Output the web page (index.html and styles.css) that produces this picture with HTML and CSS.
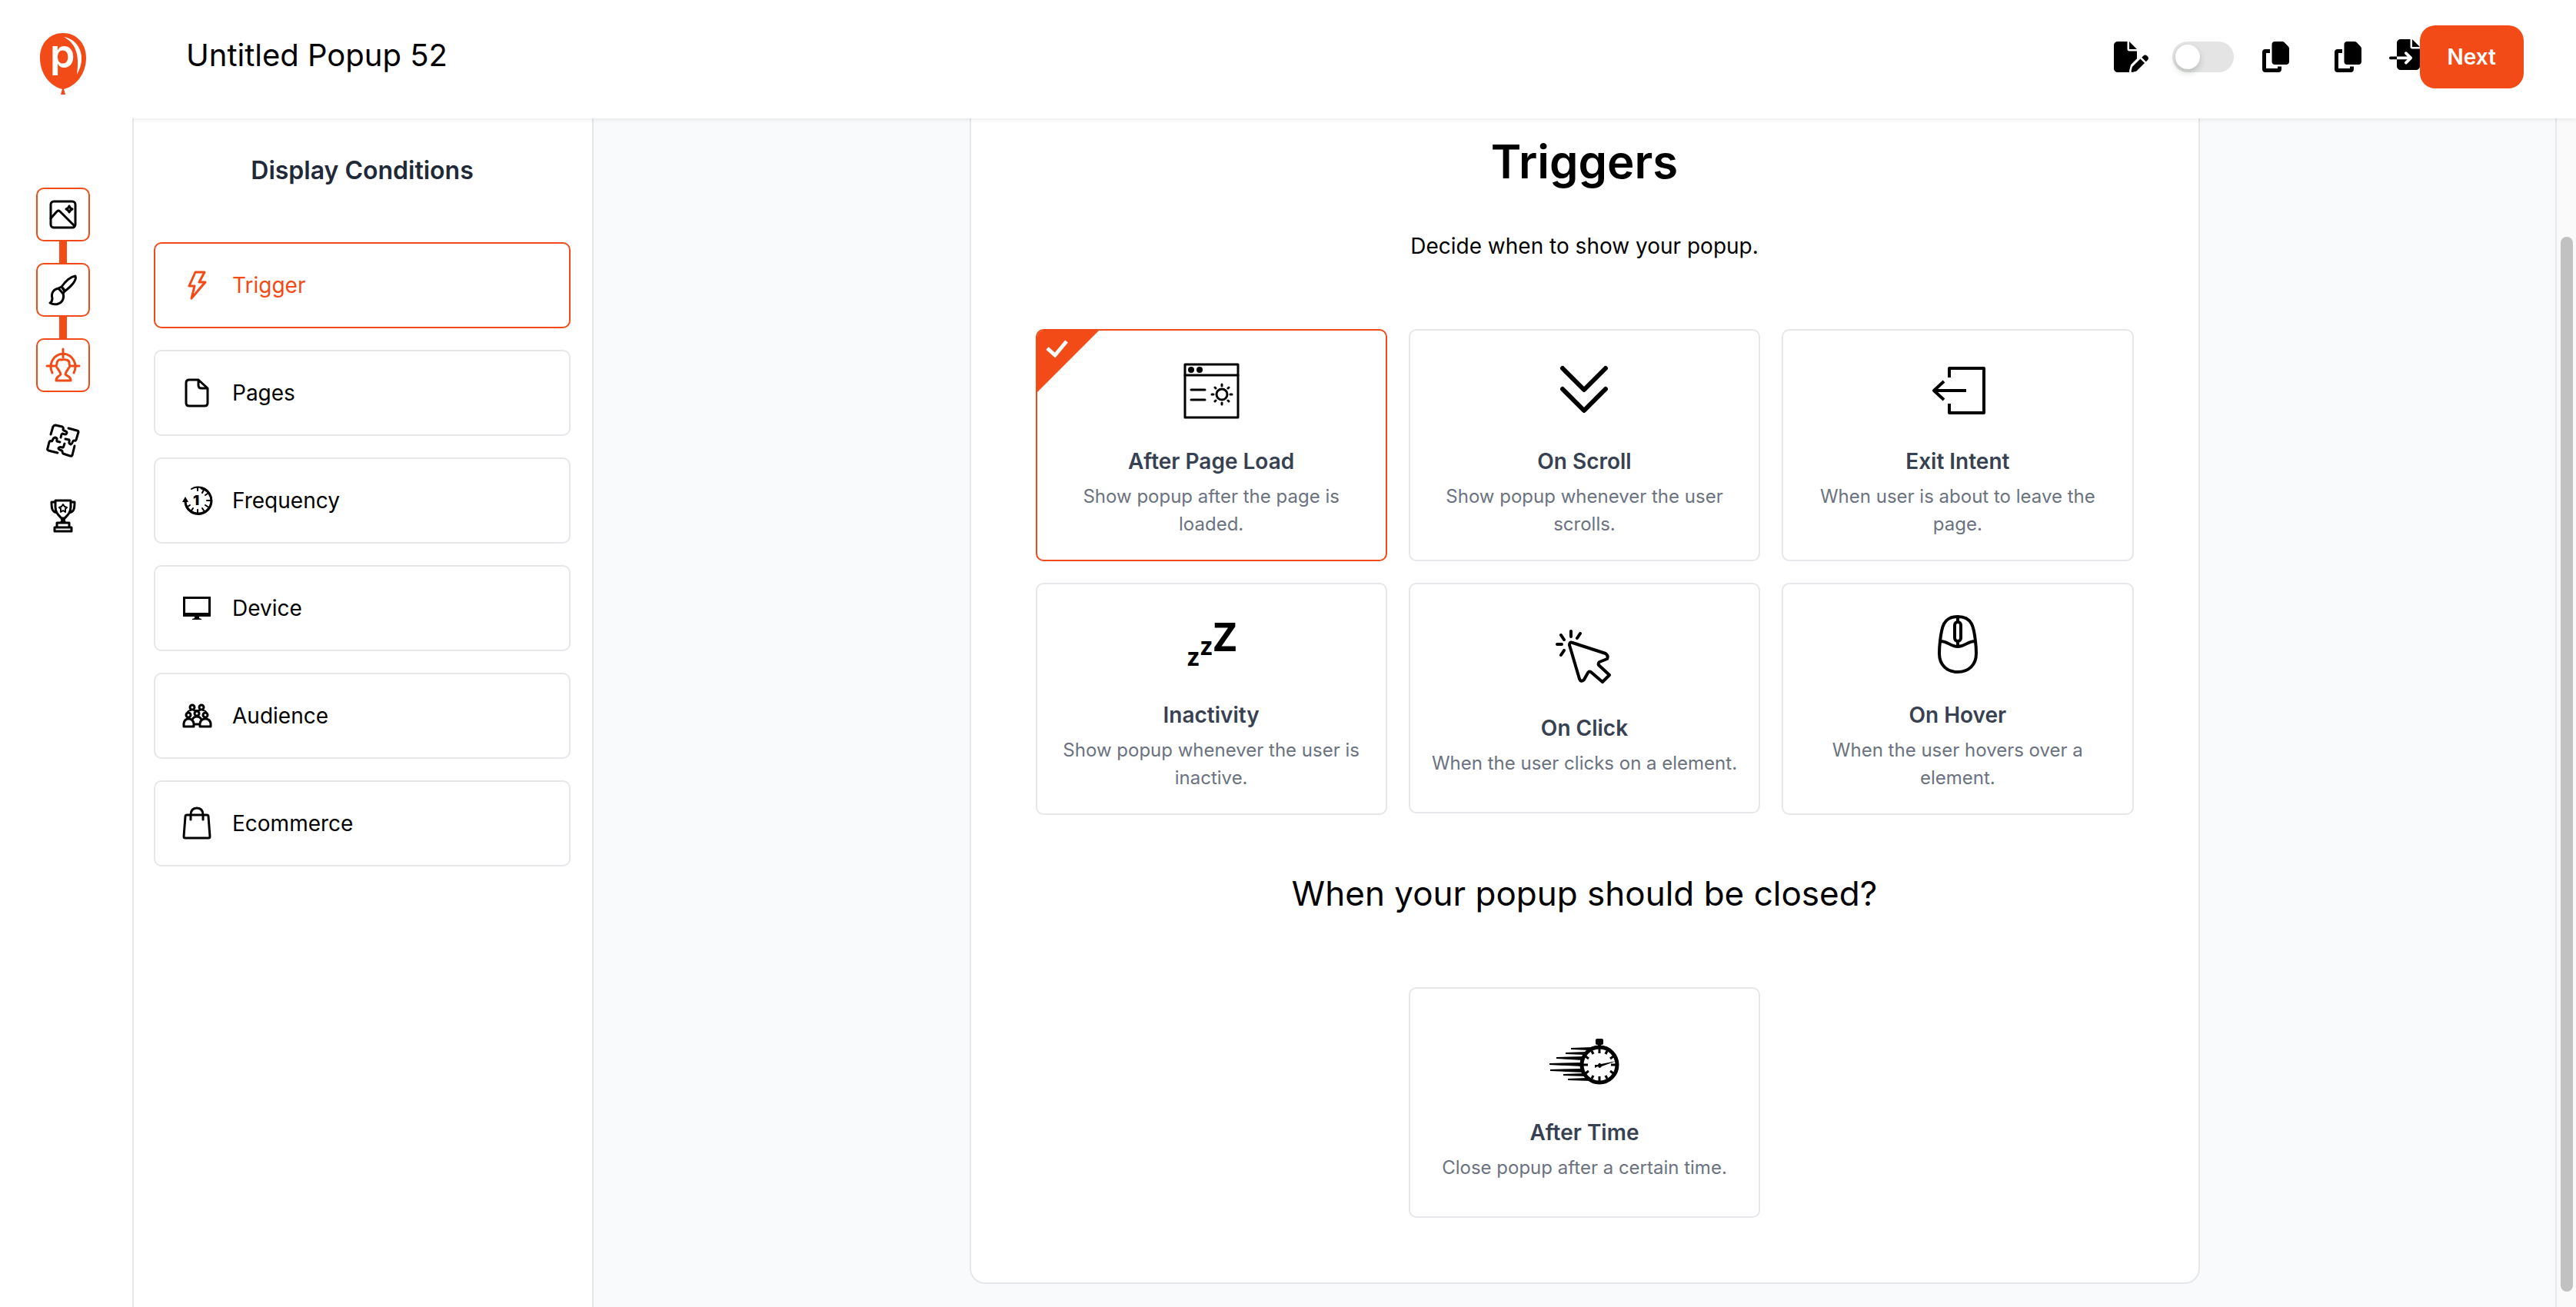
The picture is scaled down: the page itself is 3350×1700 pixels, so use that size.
FILE: index.html
```html
<!DOCTYPE html>
<html lang="en">
<head>
  <meta charset="UTF-8">
  <title>Untitled Popup 52</title>
  <link rel="stylesheet" href="styles.css">
</head>
<body>
<div class="app">
  <!-- left rail -->
  <nav class="rail">
    <a class="logo" href="#" aria-label="Home">
      <svg width="60" height="80" viewBox="0 0 60 80">
        <path d="M30 0C47 0 60 13 60 32C60 53 47 69 31 73L32 76L33 80H27L28 76L29 73C13 69 0 53 0 32C0 13 13 0 30 0Z" fill="#f24b17"/>
        <text class="logo-letter" x="13" y="45">p</text>
        <path d="M31 5C50 8 62 30 48 54C51 32 49 15 31 5Z" fill="#fff"/>
      </svg>
    </a>
    <a class="step done" href="#" aria-label="Template">
      <svg width="44" height="44" viewBox="0 0 44 44"><g class="line"><rect x="6" y="5" width="32" height="34" rx="4"/><path d="M6 27L14 18Q16 16 18 18L37 37M30 11Q31 14 34 15Q31 16 30 19Q29 16 26 15Q29 14 30 11Z"/></g></svg>
    </a>
    <span class="link"></span>
    <a class="step done" href="#" aria-label="Design">
      <svg width="44" height="44" viewBox="0 0 44 44"><g class="line"><path d="M20 18C25 11 32 5 38 4C40 9 33 17 24 24ZM20 18L16 20L22 27L24 24M16 20C10 21 6 26 8 33C8 36 7 38 5 39C12 43 20 40 22 34C23 31 23 29 22 27M20 18Q23 20 24 24"/></g></svg>
    </a>
    <span class="link"></span>
    <a class="step done active" href="#" aria-label="Targeting">
      <svg width="44" height="44" viewBox="0 0 44 44"><g class="line"><path d="M22 1V12M1 23H11M33 23H43M8 32C3 22 8 8 22 7C36 8 41 22 36 32"/><path d="M19 34C19 31 16 29 15 26C13 25 13 22 14 20C14 16 17 14 20 15C25 14 31 15 30 20C31 22 31 25 29 26C28 29 25 31 25 34C28 37 32 36 32 42H13C13 36 17 37 19 34Z"/></g></svg>
    </a>
    <a class="step next" href="#" aria-label="Integrations">
      <svg width="44" height="44" viewBox="0 0 44 44"><g class="line"><path d="M6 14L9 4Q10 2 12 2L21 4Q23 5 22 8C23 10 27 9 27 12C26 15 24 14 21 13C19 14 20 16 19 18"/><path d="M29 6L40 9Q42 9 42 11L39 21Q38 23 36 22C34 22 35 26 32 27C28 26 31 22 30 21L25 20"/><path d="M37 29L34 41Q33 43 31 42L22 39Q21 38 21 36C21 34 16 35 16 32C17 29 20 31 22 31C23 30 23 28 24 26"/><path d="M15 38L3 35Q1 34 2 32L4 24Q5 22 7 23C9 23 8 18 12 18C16 19 13 22 14 23L18 24"/></g></svg>
    </a>
    <a class="step next" href="#" aria-label="Goals">
      <svg width="44" height="44" viewBox="0 0 44 44"><g class="line"><path d="M12 2H32V10C32 18 28 21 24 25H20C16 21 12 18 12 10ZM12 4H7C7 13 8 17 14 18M32 4H37C37 13 36 17 30 18M20 25L21 28L19 31M24 25L23 28L25 31M14 31H30V37H14ZM11 37H33V42H11Z"/><path class="thin" d="M22 7L24 10L27 11L25 13L25 17L22 15L19 17L19 13L17 11L20 10Z"/></g></svg>
    </a>
  </nav>

  <div class="page">
    <header class="topbar">
      <h1 class="popup-name">Untitled Popup 52</h1>
      <button class="icon-btn" aria-label="Edit">
        <svg width="45" height="40" viewBox="0 0 576 512"><path d="M0 64C0 28.7 28.7 0 64 0L224 0l0 128c0 17.7 14.3 32 32 32l128 0 0 125.7-86.8 86.8c-10.3 10.3-17.5 23.1-21 37.2l-18.7 74.9c-2.3 9.2-1.8 18.8 1.3 27.5L64 512c-35.3 0-64-28.7-64-64L0 64zm384 64l-128 0L256 0 384 128zM549.8 235.7l14.4 14.4c15.6 15.6 15.6 40.9 0 56.6l-29.4 29.4-71-71 29.4-29.4c15.6-15.6 40.9-15.6 56.6 0zM311.9 417L441.1 287.8l71 71L382.9 487.9c-4.1 4.1-9.2 7-14.9 8.4l-60.1 15c-5.5 1.4-11.2-.2-15.2-4.2s-5.6-9.7-4.2-15.2l15-60.1c1.4-5.6 4.3-10.8 8.4-14.9z"/></svg>
      </button>
      <input class="switch" type="checkbox" role="switch" aria-label="Publish popup">
      <button class="icon-btn copy" aria-label="Copy">
        <svg width="35" height="40" viewBox="0 0 448 512"><path d="M208 0L332.1 0c12.7 0 24.9 5.1 33.9 14.1l67.9 67.9c9 9 14.1 21.2 14.1 33.9L448 336c0 26.5-21.5 48-48 48l-192 0c-26.5 0-48-21.5-48-48l0-288c0-26.5 21.5-48 48-48zM48 128l80 0 0 64-64 0 0 256 192 0 0-32 64 0 0 48c0 26.5-21.5 48-48 48L48 512c-26.5 0-48-21.5-48-48L0 176c0-26.5 21.5-48 48-48z"/></svg>
      </button>
      <button class="icon-btn duplicate" aria-label="Duplicate">
        <svg width="35" height="40" viewBox="0 0 448 512"><path d="M208 0L332.1 0c12.7 0 24.9 5.1 33.9 14.1l67.9 67.9c9 9 14.1 21.2 14.1 33.9L448 336c0 26.5-21.5 48-48 48l-192 0c-26.5 0-48-21.5-48-48l0-288c0-26.5 21.5-48 48-48zM48 128l80 0 0 64-64 0 0 256 192 0 0-32 64 0 0 48c0 26.5-21.5 48-48 48L48 512c-26.5 0-48-21.5-48-48L0 176c0-26.5 21.5-48 48-48z"/></svg>
      </button>
      <button class="icon-btn import" aria-label="Import">
        <svg width="40" height="40" viewBox="0 0 512 512"><path d="M128 64c0-35.3 28.7-64 64-64L352 0l0 128c0 17.7 14.3 32 32 32l128 0 0 288c0 35.3-28.7 64-64 64l-256 0c-35.3 0-64-28.7-64-64l0-112 174.1 0-39 39c-9.4 9.4-9.4 24.6 0 33.9s24.6 9.4 33.9 0l80-80c9.4-9.4 9.4-24.6 0-33.9l-80-80c-9.4-9.4-24.6-9.4-33.9 0s-9.4 24.6 0 33.9l39 39L128 288l0-224zm0 224l0 48L24 336c-13.3 0-24-10.7-24-24s10.7-24 24-24l104 0zM512 128l-128 0L384 0 512 128z"/></svg>
      </button>
      <button class="next-btn">Next</button>
    </header>

    <div class="content">
      <aside class="sidebar">
        <h2>Display Conditions</h2>
        <ul>
          <li><a class="condition active" href="#">
            <svg width="44" height="44" viewBox="0 0 44 44"><path class="line" d="M20 5H32L25 18H33L15 39L19 23H12Z"/></svg>
            Trigger</a></li>
          <li><a class="condition" href="#">
            <svg width="44" height="44" viewBox="0 0 44 44"><path class="line" d="M24 5H12Q8 5 8 9V35Q8 39 12 39H32Q36 39 36 35V16ZM24 5V12Q24 16 28 16H36"/></svg>
            Pages</a></li>
          <li><a class="condition" href="#">
            <svg width="44" height="44" viewBox="0 0 44 44"><path class="line thin" d="M15 7A17 17 0 1 1 7 24M23 5V9M31 8L29 12M36 13L33 15M39 22H35M36 30L33 28M31 35L29 32M23 38V34M15 35L17 32M10 30L13 28"/><path class="line" d="M28 6A17 17 0 1 1 7 24"/><path d="M3 24L7 17L11 24Z"/><text class="count" x="17" y="28">1</text></svg>
            Frequency</a></li>
          <li><a class="condition" href="#">
            <svg width="44" height="44" viewBox="0 0 44 44"><path fill-rule="evenodd" d="M4 7H40V33H25V35L28 36V37H16V36L19 35V33H4ZM7 10V28H37V10Z"/></svg>
            Device</a></li>
          <li><a class="condition" href="#">
            <svg width="44" height="44" viewBox="0 0 44 44"><g class="line"><circle cx="16" cy="11" r="3"/><circle cx="28" cy="11" r="3"/><circle cx="22" cy="19" r="3"/><circle cx="11" cy="21" r="3"/><circle cx="33" cy="21" r="3"/><path d="M5 36V32Q6 26 11 26Q17 26 18 32V36ZM26 36V32Q27 26 33 26Q39 26 40 32V36ZM16 27Q18 23 22 23Q26 23 28 27M18 33H26"/><path class="thin" d="M10 17Q11 15 14 15M34 17Q33 15 30 15M18 15H26"/></g></svg>
            Audience</a></li>
          <li><a class="condition" href="#">
            <svg width="44" height="44" viewBox="0 0 44 44"><path class="line" d="M9 11H35Q37 11 37 13L39 39Q39 41 37 41H7Q5 41 5 39L7 13Q7 11 9 11ZM14 17V11Q14 2 22 2Q30 2 30 11V17"/></svg>
            Ecommerce</a></li>
        </ul>
      </aside>

      <main class="main">
        <section class="panel">
          <h2 class="title">Triggers</h2>
          <p class="lead">Decide when to show your popup.</p>
          <div class="cards">
            <button class="card selected" aria-pressed="true">
              <svg class="tick" width="80" height="80" viewBox="0 0 80 80"><path d="M0 0H80L0 80Z" fill="#f24b17"/><path d="M13 23L23 32L38 14" fill="none" stroke="#fff" stroke-width="5"/></svg>
              <svg width="100" height="100" viewBox="0 0 100 100"><g class="icon"><rect x="16" y="16" width="69" height="69"/><path d="M16 30H85M24 49H42M24 62H42"/><circle cx="64" cy="55" r="7"/><path d="M64 42V44M64 66V68M51 55H53M75 55H77M55 46L56 47M72 63L73 64M73 46L72 47M56 63L55 64"/></g><circle cx="24" cy="23" r="4"/><circle cx="35" cy="23" r="4"/></svg>
              <strong>After Page Load</strong>
              <span>Show popup after the page is loaded.</span>
            </button>
            <button class="card">
              <svg width="100" height="100" viewBox="0 0 100 100"><path class="icon" stroke-width="6" d="M22 21L50 49L78 21M22 48L50 76L78 48"/></svg>
              <strong>On Scroll</strong>
              <span>Show popup whenever the user scrolls.</span>
            </button>
            <button class="card">
              <svg width="100" height="100" viewBox="0 0 100 100"><path class="icon square" stroke-width="4" d="M39 33V21H84V79H39V67M61 50H19M32 38L19 50L32 62"/></svg>
              <strong>Exit Intent</strong>
              <span>When user is about to leave the page.</span>
            </button>
            <button class="card">
              <svg width="100" height="100" viewBox="0 0 100 100"><text class="zzz" x="19" y="78">z</text><text class="zzz" x="36" y="64">z</text><text class="zzz large" x="53" y="59">Z</text></svg>
              <strong>Inactivity</strong>
              <span>Show popup whenever the user is inactive.</span>
            </button>
            <button class="card">
              <svg width="100" height="100" viewBox="0 0 100 100"><path class="icon" stroke-width="4" d="M35 31L78 45Q82 48 80 52L70 56Q68 58 69 60L83 73L74 82L60 70Q57 67 55 70L50 79Q46 83 44 78L31 34Q31 29 35 31ZM33 16V23M45 19L41 25M20 21L24 27M15 33H21M24 41L20 47"/></svg>
              <strong>On Click</strong>
              <span>When the user clicks on a element.</span>
            </button>
            <button class="card">
              <svg width="100" height="100" viewBox="0 0 100 100"><path class="icon" stroke-width="4" d="M50 14C31 14 29 28 27 46Q26 54 26 62C26 77 36 86 50 86C64 86 74 77 74 62Q74 54 73 46C71 28 69 14 50 14ZM27 46C38 46 40 53 50 53C60 53 62 46 73 46M50 14V21M50 46V53"/><rect class="icon" stroke-width="4" x="46" y="21" width="8" height="25" rx="4"/></svg>
              <strong>On Hover</strong>
              <span>When the user hovers over a element.</span>
            </button>
          </div>

          <h2 class="subtitle">When your popup should be closed?</h2>
          <div class="cards">
            <button class="card middle">
              <svg width="100" height="100" viewBox="0 0 100 100"><circle cx="70" cy="54" r="23" fill="none" stroke="#000" stroke-width="5"/><rect x="65" y="20" width="10" height="8" rx="2"/><path d="M68 27H72V32H68ZM33 32L60 31L56 35L33 34ZM26 38L54 37L51 41L26 40ZM14 44L50 43L48 48L14 46ZM5 52L48 51V56L5 54ZM6 60L48 59L50 64L6 62ZM23 66L50 65L53 69L23 68ZM29 72L54 71L58 75L29 74ZM64 54L68 54Q70 50 72 53L92 49L73 56Q70 60 68 56L64 58Z"/><path d="M70 33V39M70 69V75M49 54H55M85 54H91M60 36L62 40M78 68L80 72M52 43L56 46M84 62L88 65M80 36L78 40M62 68L60 72M88 43L84 46M56 62L52 65" stroke="#000" stroke-width="3"/></svg>
              <strong>After Time</strong>
              <span>Close popup after a certain time.</span>
            </button>
          </div>
        </section>
      </main>
      <div class="scrollbar"><div class="thumb"></div></div>
    </div>
  </div>
</div>
</body>
</html>
```
FILE: styles.css
```css
* {
  box-sizing: border-box;
  margin: 0;
  padding: 0;
}

body {
  font-family: Inter, "Liberation Sans", sans-serif;
  font-size: 28px;
  color: #000;
  background: #fff;
}

ul {
  list-style: none;
}

a {
  color: inherit;
  text-decoration: none;
}

button {
  font: inherit;
  color: inherit;
  background: none;
  border: 0;
  cursor: pointer;
}

svg {
  display: block;
  flex: none;
  fill: currentColor;
  overflow: visible;
}

.app {
  display: flex;
  height: 100vh;
  overflow: hidden;
}

/* rail */
.rail {
  flex: none;
  width: 172px;
  padding: 43px 8px 0 0;
  display: flex;
  flex-direction: column;
  align-items: center;
}

.logo {
  margin-bottom: 121px;
}

.logo-letter {
  font-size: 52px;
  font-weight: 600;
  fill: #fff;
}

.step {
  width: 70px;
  height: 70px;
  display: flex;
  align-items: center;
  justify-content: center;
}

.step.done {
  border: 2px solid #f24b17;
  border-radius: 10px;
}

.step.active {
  color: #f24b17;
}

.step.next {
  margin-top: 28px;
}

.link {
  width: 10px;
  height: 28px;
  background: #f24b17;
}

.line {
  fill: none;
  stroke: currentColor;
  stroke-width: 3;
  stroke-linecap: round;
  stroke-linejoin: round;
}

.thin {
  stroke-width: 2;
}

/* header */
.page {
  flex: 1;
  min-width: 0;
  display: flex;
  flex-direction: column;
}

.topbar {
  position: relative;
  z-index: 1;
  display: flex;
  align-items: center;
  padding: 33px 68px 39px 70px;
  background: #fff;
  box-shadow: 0 2px 6px rgba(0, 0, 0, 0.08);
  clip-path: inset(0 0 -10px 0);
}

.popup-name {
  flex: 1;
  align-self: flex-start;
  font-size: 40px;
  font-weight: 400;
  line-height: 78px;
}

.switch {
  appearance: none;
  width: 80px;
  height: 40px;
  margin: 0 37px 0 31px;
  padding: 4px;
  border-radius: 20px;
  background: #e4e4e4;
  cursor: pointer;
}

.switch::before {
  content: "";
  display: block;
  width: 32px;
  height: 32px;
  border-radius: 50%;
  background: #fff;
  box-shadow: 0 4px 8px rgba(0, 35, 11, 0.2);
}

.switch:checked {
  background: #f24b17;
}

.switch:checked::before {
  margin-left: auto;
}

.copy {
  margin-right: 59px;
}

.duplicate {
  margin-right: 36px;
}

.import {
  padding-bottom: 6px;
}

.next-btn {
  padding: 20px 36px;
  border-radius: 20px;
  background: #f24b17;
  color: #fff;
  font-weight: 600;
  line-height: 42px;
}

.content {
  flex: 1;
  min-height: 0;
  display: flex;
}

/* sidebar */
.sidebar {
  flex: none;
  width: 600px;
  padding: 48px 28px 48px 26px;
  border: solid #e5e7eb;
  border-width: 0 2px;
}

.sidebar h2 {
  margin-bottom: 73px;
  font-size: 32px;
  font-weight: 600;
  line-height: 40px;
  text-align: center;
  color: #1f2937;
}

.condition {
  display: flex;
  align-items: center;
  gap: 24px;
  height: 112px;
  margin-bottom: 28px;
  padding: 0 32px;
  border: 2px solid #e5e7eb;
  border-radius: 10px;
}

.condition.active {
  border-color: #f24b17;
  color: #f24b17;
}

.count {
  font-size: 18px;
  font-weight: 900;
}

/* main */
.main {
  flex: 1;
  min-width: 0;
  padding-left: 26px;
  background: #f9fafc;
  border-right: 2px solid #e5e7eb;
}

.panel {
  width: 1600px;
  max-width: 100%;
  margin: 0 auto;
  padding: 20px 84px 84px;
  background: #fff;
  border: 2px solid #e5e7eb;
  border-top: 0;
  border-radius: 0 0 20px 20px;
  text-align: center;
}

.title {
  margin-bottom: 56px;
  font-size: 60px;
  font-weight: 600;
  line-height: 72px;
}

.lead {
  margin-bottom: 90px;
  line-height: 36px;
}

.subtitle {
  margin: 74px 0 94px;
  font-size: 44px;
  font-weight: 400;
  line-height: 56px;
}

.cards {
  display: grid;
  grid-template-columns: repeat(3, 1fr);
  align-items: start;
  gap: 28px;
}

.card {
  position: relative;
  display: flex;
  flex-direction: column;
  align-items: center;
  justify-content: center;
  min-height: 300px;
  padding: 28px;
  border: 2px solid #e5e7eb;
  border-radius: 10px;
  overflow: hidden;
}

.card.selected {
  border-color: #f24b17;
}

.card.middle {
  grid-column: 2;
}

.card strong {
  margin: 22px 0 8px;
  font-weight: 600;
  line-height: 40px;
  color: #374151;
}

.card span {
  font-size: 24px;
  line-height: 36px;
  color: #6b7280;
}

.tick {
  position: absolute;
  top: 0;
  left: 0;
}

.icon {
  fill: none;
  stroke: #000;
  stroke-linecap: round;
  stroke-linejoin: round;
}

g.icon {
  stroke-width: 3;
}

.icon.square {
  stroke-linecap: butt;
}

.zzz {
  font-family: "Open Sans", sans-serif;
  font-size: 32px;
  font-weight: 700;
}

.zzz.large {
  font-size: 52px;
}

/* scrollbar */
.scrollbar {
  flex: none;
  width: 25px;
  padding: 154px 4px 20px 5px;
  background: #fafafa;
}

.thumb {
  height: 100%;
  border-radius: 8px;
  background: #c1c1c1;
}
```
